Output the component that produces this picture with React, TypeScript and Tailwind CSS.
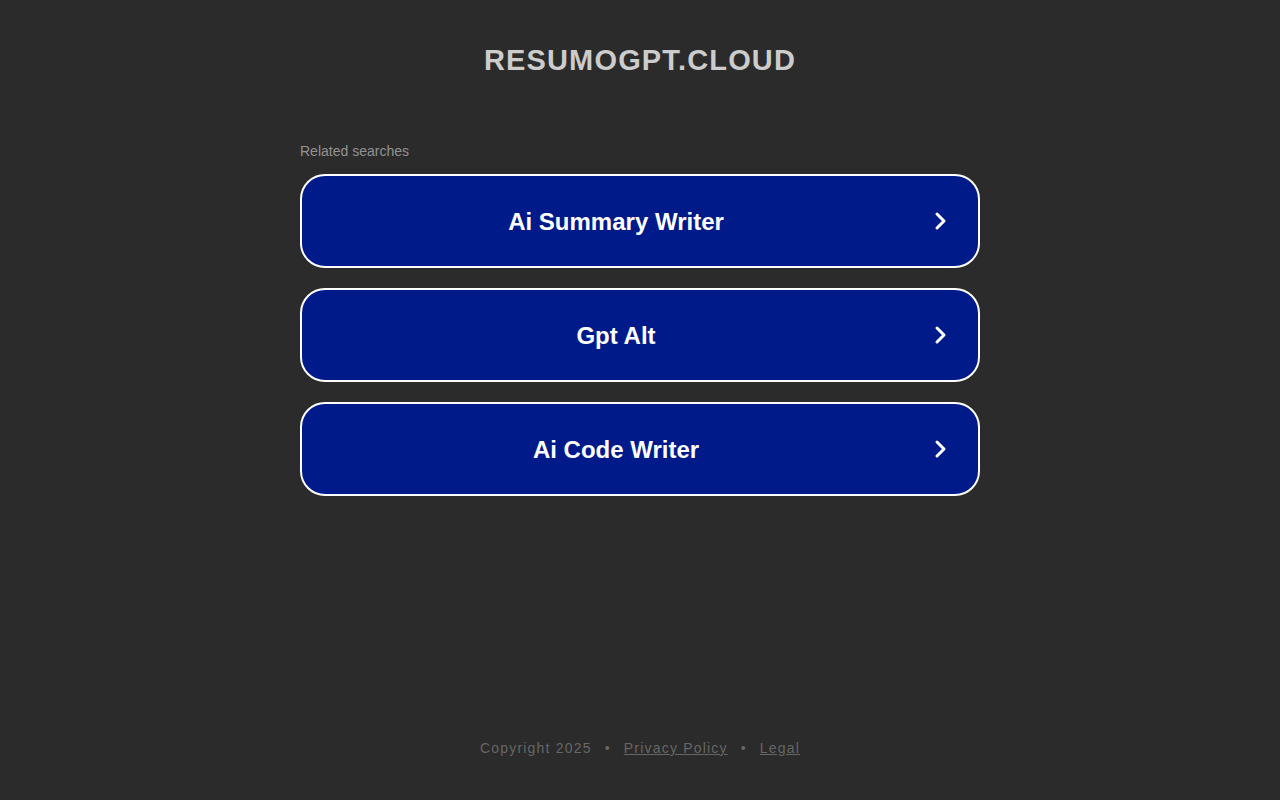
import React from "react";

const items = ["Ai Summary Writer", "Gpt Alt", "Ai Code Writer"];

function Chevron() {
  return (
    <svg width="24" height="24" viewBox="0 0 24 24" fill="none" stroke="white" strokeWidth="3" strokeLinecap="round" strokeLinejoin="round">
      <path d="M9 5l7 7-7 7" />
    </svg>
  );
}

export default function App() {
  return (
    <div className="min-h-[800px] bg-[#2b2b2b] flex flex-col items-center" style={{ fontFamily: "Arial, 'Liberation Sans', sans-serif" }}>
      <div className="h-[120px] flex items-center justify-center">
        <h1 className="text-[29px] font-bold text-[#cccccc] tracking-[1.15px] leading-none">RESUMOGPT.CLOUD</h1>
      </div>
      <div className="w-[680px] mt-[21px]">
        <div className="text-[14px] text-[#929292] leading-[20px] mb-[13px]">Related searches</div>
        <div className="flex flex-col gap-[20px]">
          {items.map((t) => (
            <div key={t} className="h-[94px] rounded-[25px] border-2 border-white bg-[#011a8a] flex items-center pl-[2px] pr-[26px]">
              <div className="flex-1 text-center text-[24px] font-bold text-white pt-[2px]">{t}</div>
              <Chevron />
            </div>
          ))}
        </div>
      </div>
      <div className="flex-1" />
      <div className="pb-[41px] text-[14px] text-[#666666] tracking-[1.2px] flex items-center gap-[13px]">
        <span>Copyright 2025</span>
        <span>•</span>
        <span className="underline">Privacy Policy</span>
        <span>•</span>
        <span className="underline">Legal</span>
      </div>
    </div>
  );
}
